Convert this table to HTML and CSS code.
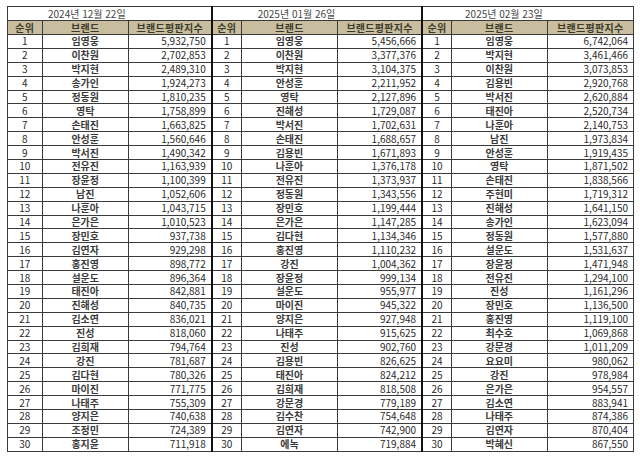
FILE: index.html
```html
<!DOCTYPE html>
<html lang="ko">
<head>
<meta charset="utf-8">
<title>브랜드평판지수</title>
<link rel="stylesheet" href="styles.css">
</head>
<body>
<div class="wrap">
<table class="rank">
<colgroup>
<col class="w-r1"><col class="w-b1"><col class="w-s1">
<col class="w-r2"><col class="w-b2"><col class="w-s2">
<col class="w-r3"><col class="w-b3"><col class="w-s3">
</colgroup>
<thead>
<tr class="title">
<td colspan="3" class="t1">2024년 12월 22일</td>
<td colspan="3" class="t2 sep">2025년 01월 26일</td>
<td colspan="3" class="t3 sep">2025년 02월 23일</td>
</tr>
<tr class="head">
<th>순위</th><th>브랜드</th><th>브랜드평판지수</th>
<th class="sep">순위</th><th>브랜드</th><th>브랜드평판지수</th>
<th class="sep">순위</th><th>브랜드</th><th>브랜드평판지수</th>
</tr>
</thead>
<tbody>
<tr><td>1</td><td class="n">임영웅</td><td class="v">5,932,750</td><td class="sep">1</td><td class="n">임영웅</td><td class="v">5,456,666</td><td class="sep">1</td><td class="n">임영웅</td><td class="v">6,742,064</td></tr>
<tr><td>2</td><td class="n">이찬원</td><td class="v">2,702,853</td><td class="sep">2</td><td class="n">이찬원</td><td class="v">3,377,376</td><td class="sep">2</td><td class="n">박지현</td><td class="v">3,461,466</td></tr>
<tr><td>3</td><td class="n">박지현</td><td class="v">2,489,310</td><td class="sep">3</td><td class="n">박지현</td><td class="v">3,104,375</td><td class="sep">3</td><td class="n">이찬원</td><td class="v">3,073,853</td></tr>
<tr><td>4</td><td class="n">송가인</td><td class="v">1,924,273</td><td class="sep">4</td><td class="n">안성훈</td><td class="v">2,211,952</td><td class="sep">4</td><td class="n">김용빈</td><td class="v">2,920,768</td></tr>
<tr><td>5</td><td class="n">정동원</td><td class="v">1,810,235</td><td class="sep">5</td><td class="n">영탁</td><td class="v">2,127,896</td><td class="sep">5</td><td class="n">박서진</td><td class="v">2,620,884</td></tr>
<tr><td>6</td><td class="n">영탁</td><td class="v">1,758,899</td><td class="sep">6</td><td class="n">진해성</td><td class="v">1,729,087</td><td class="sep">6</td><td class="n">태진아</td><td class="v">2,520,734</td></tr>
<tr><td>7</td><td class="n">손태진</td><td class="v">1,663,825</td><td class="sep">7</td><td class="n">박서진</td><td class="v">1,702,631</td><td class="sep">7</td><td class="n">나훈아</td><td class="v">2,140,753</td></tr>
<tr><td>8</td><td class="n">안성훈</td><td class="v">1,560,646</td><td class="sep">8</td><td class="n">손태진</td><td class="v">1,688,657</td><td class="sep">8</td><td class="n">남진</td><td class="v">1,973,834</td></tr>
<tr><td>9</td><td class="n">박서진</td><td class="v">1,490,342</td><td class="sep">9</td><td class="n">김용빈</td><td class="v">1,671,893</td><td class="sep">9</td><td class="n">안성훈</td><td class="v">1,919,435</td></tr>
<tr><td>10</td><td class="n">전유진</td><td class="v">1,163,939</td><td class="sep">10</td><td class="n">나훈아</td><td class="v">1,376,178</td><td class="sep">10</td><td class="n">영탁</td><td class="v">1,871,502</td></tr>
<tr><td>11</td><td class="n">장윤정</td><td class="v">1,100,399</td><td class="sep">11</td><td class="n">전유진</td><td class="v">1,373,937</td><td class="sep">11</td><td class="n">손태진</td><td class="v">1,838,566</td></tr>
<tr><td>12</td><td class="n">남진</td><td class="v">1,052,606</td><td class="sep">12</td><td class="n">정동원</td><td class="v">1,343,556</td><td class="sep">12</td><td class="n">주현미</td><td class="v">1,719,312</td></tr>
<tr><td>13</td><td class="n">나훈아</td><td class="v">1,043,715</td><td class="sep">13</td><td class="n">장민호</td><td class="v">1,199,444</td><td class="sep">13</td><td class="n">진해성</td><td class="v">1,641,150</td></tr>
<tr><td>14</td><td class="n">은가은</td><td class="v">1,010,523</td><td class="sep">14</td><td class="n">은가은</td><td class="v">1,147,285</td><td class="sep">14</td><td class="n">송가인</td><td class="v">1,623,094</td></tr>
<tr><td>15</td><td class="n">장민호</td><td class="v">937,738</td><td class="sep">15</td><td class="n">김다현</td><td class="v">1,134,346</td><td class="sep">15</td><td class="n">정동원</td><td class="v">1,577,880</td></tr>
<tr><td>16</td><td class="n">김연자</td><td class="v">929,298</td><td class="sep">16</td><td class="n">홍진영</td><td class="v">1,110,232</td><td class="sep">16</td><td class="n">설운도</td><td class="v">1,531,637</td></tr>
<tr><td>17</td><td class="n">홍진영</td><td class="v">898,772</td><td class="sep">17</td><td class="n">강진</td><td class="v">1,004,362</td><td class="sep">17</td><td class="n">장윤정</td><td class="v">1,471,948</td></tr>
<tr><td>18</td><td class="n">설운도</td><td class="v">896,364</td><td class="sep">18</td><td class="n">장윤정</td><td class="v">999,134</td><td class="sep">18</td><td class="n">전유진</td><td class="v">1,294,100</td></tr>
<tr><td>19</td><td class="n">태진아</td><td class="v">842,881</td><td class="sep">19</td><td class="n">설운도</td><td class="v">955,977</td><td class="sep">19</td><td class="n">진성</td><td class="v">1,161,296</td></tr>
<tr><td>20</td><td class="n">진해성</td><td class="v">840,735</td><td class="sep">20</td><td class="n">마이진</td><td class="v">945,322</td><td class="sep">20</td><td class="n">장민호</td><td class="v">1,136,500</td></tr>
<tr><td>21</td><td class="n">김소연</td><td class="v">836,021</td><td class="sep">21</td><td class="n">양지은</td><td class="v">927,948</td><td class="sep">21</td><td class="n">홍진영</td><td class="v">1,119,100</td></tr>
<tr><td>22</td><td class="n">진성</td><td class="v">818,060</td><td class="sep">22</td><td class="n">나태주</td><td class="v">915,625</td><td class="sep">22</td><td class="n">최수호</td><td class="v">1,069,868</td></tr>
<tr><td>23</td><td class="n">김희재</td><td class="v">794,764</td><td class="sep">23</td><td class="n">진성</td><td class="v">902,760</td><td class="sep">23</td><td class="n">강문경</td><td class="v">1,011,209</td></tr>
<tr><td>24</td><td class="n">강진</td><td class="v">781,687</td><td class="sep">24</td><td class="n">김용빈</td><td class="v">826,625</td><td class="sep">24</td><td class="n">요요미</td><td class="v">980,062</td></tr>
<tr><td>25</td><td class="n">김다현</td><td class="v">780,326</td><td class="sep">25</td><td class="n">태진아</td><td class="v">824,212</td><td class="sep">25</td><td class="n">강진</td><td class="v">978,984</td></tr>
<tr><td>26</td><td class="n">마이진</td><td class="v">771,775</td><td class="sep">26</td><td class="n">김희재</td><td class="v">818,508</td><td class="sep">26</td><td class="n">은가은</td><td class="v">954,557</td></tr>
<tr><td>27</td><td class="n">나태주</td><td class="v">755,309</td><td class="sep">27</td><td class="n">강문경</td><td class="v">779,189</td><td class="sep">27</td><td class="n">김소연</td><td class="v">883,941</td></tr>
<tr><td>28</td><td class="n">양지은</td><td class="v">740,638</td><td class="sep">28</td><td class="n">김수찬</td><td class="v">754,648</td><td class="sep">28</td><td class="n">나태주</td><td class="v">874,386</td></tr>
<tr><td>29</td><td class="n">조정민</td><td class="v">724,389</td><td class="sep">29</td><td class="n">김연자</td><td class="v">742,900</td><td class="sep">29</td><td class="n">김연자</td><td class="v">870,404</td></tr>
<tr><td>30</td><td class="n">홍지윤</td><td class="v">711,918</td><td class="sep">30</td><td class="n">에녹</td><td class="v">719,884</td><td class="sep">30</td><td class="n">박혜신</td><td class="v">867,550</td></tr>
</tbody>
</table>
</div>
</body>
</html>
```

FILE: styles.css
```css
html, body {
  margin: 0;
  padding: 0;
  background: #ffffff;
}

.wrap {
  padding: 6px 0 0 7px;
}

.rank {
  border-collapse: collapse;
  table-layout: fixed;
  width: 627px;
  font-family: "Noto Sans CJK KR", "Noto Sans", sans-serif;
  font-size: 10px;
  color: #2a2a2a;
  border: 1px solid #111;
}

.w-r1 { width: 34px; }
.w-b1 { width: 85px; }
.w-s1 { width: 82px; }
.w-r2 { width: 29px; }
.w-b2 { width: 95px; }
.w-s2 { width: 83px; }
.w-r3 { width: 29px; }
.w-b3 { width: 94px; }
.w-s3 { width: 85px; }

.rank td,
.rank th {
  padding: 0;
  border: 1px solid #3a3a3a;
  height: 12.9px;
  line-height: 12px;
  text-align: center;
  white-space: nowrap;
  overflow: hidden;
}

.rank .sep {
  border-left: 2px solid #111;
}

.title td {
  height: 13px;
  text-align: left;
  color: #444;
  border-bottom: 1px solid #3a3a3a;
}

.title .t1 { padding-left: 40px; }
.title .t2 { padding-left: 45px; }
.title .t3 { padding-left: 42px; }

.head th {
  height: 13px;
  background: #c8bd9e;
  font-weight: 700;
  color: #3a3a2a;
  letter-spacing: 0.3px;
}

.rank td.n {
  font-weight: 700;
  color: #3a3a3a;
}

.rank td.v {
  text-align: right;
  padding-right: 5px;
}
```
